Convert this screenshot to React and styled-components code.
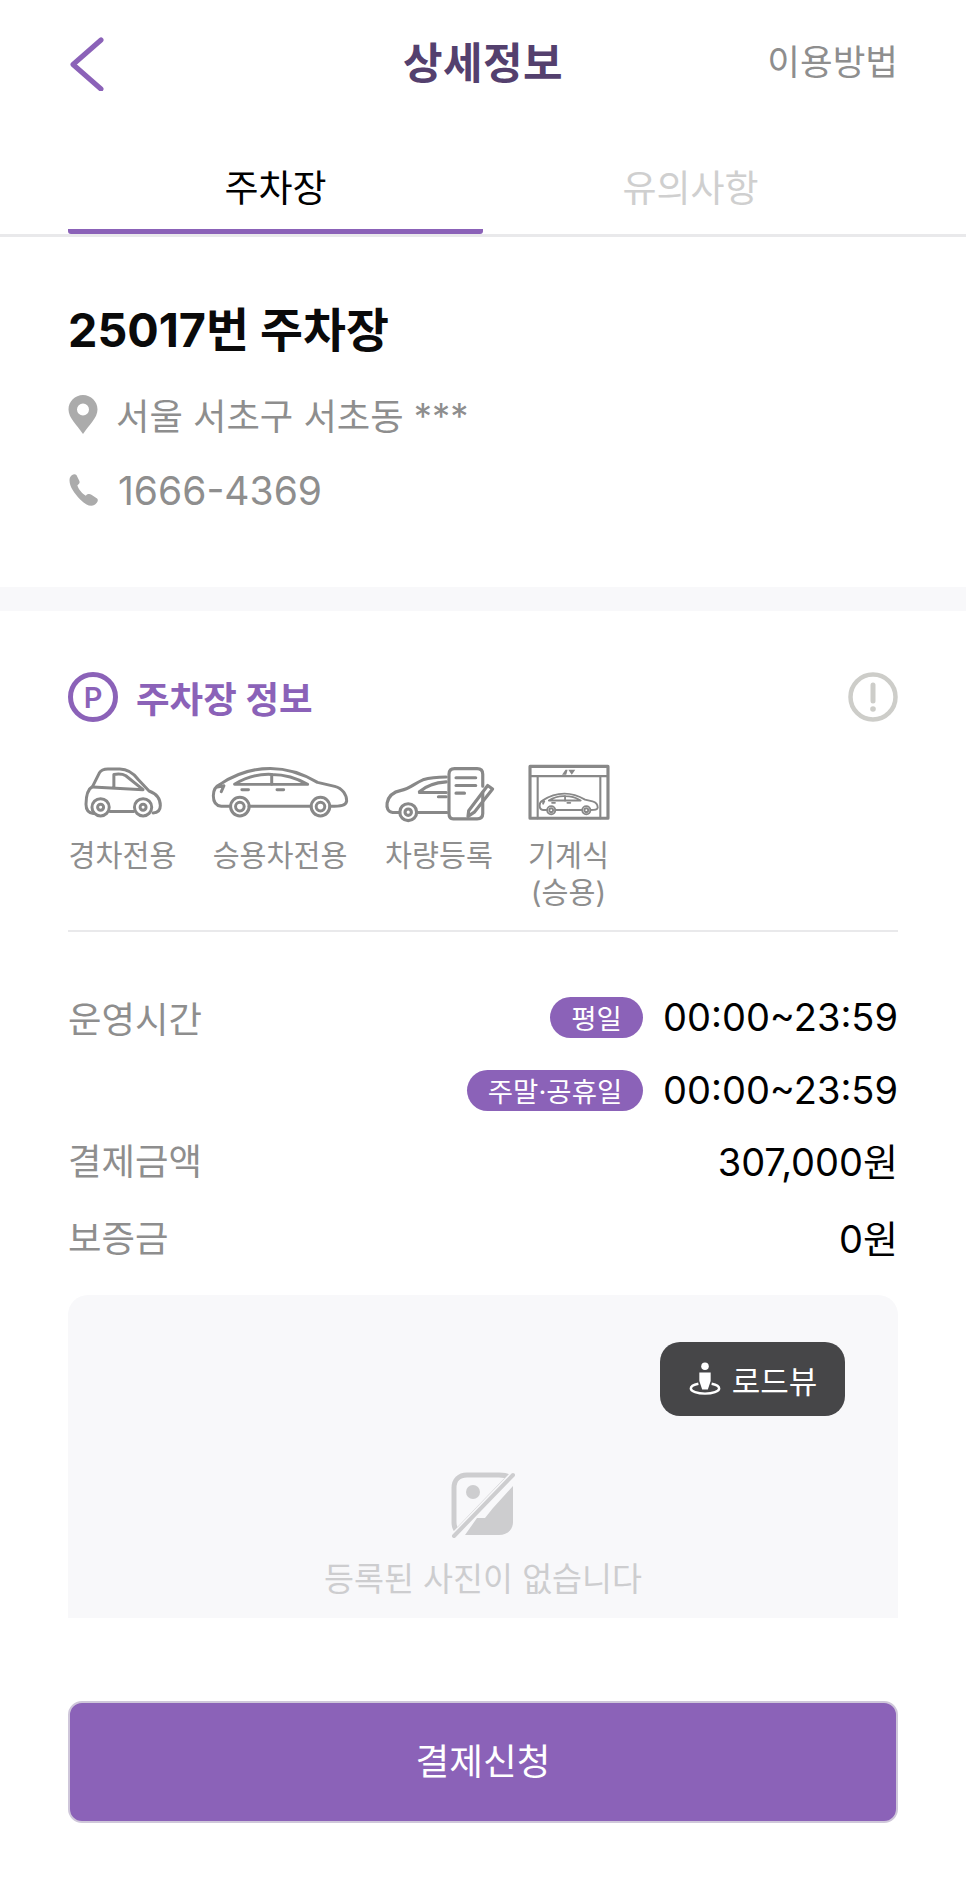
import React from "react";
import styled, { createGlobalStyle } from "styled-components";

const Global = createGlobalStyle`
  html, body { margin: 0; padding: 0; background: #fff; }
  * { box-sizing: border-box; }
  body { font-family: Inter, "Noto Sans CJK KR", sans-serif; }
`;

const PURPLE = "#8b62b8";
const GREY = "#8e8e8e";

const Page = styled.div`
  width: 966px;
  min-height: 1890px;
  background: #fff;
`;
const Header = styled.header`
  height: 125px;
  padding: 0 68px;
  display: grid;
  grid-template-columns: 1fr auto 1fr;
  align-items: center;
`;
const Back = styled.svg`
  width: 40px;
  height: 56px;
  display: block;
  fill: none;
  stroke: ${PURPLE};
  stroke-width: 5;
  stroke-linecap: round;
  stroke-linejoin: round;
`;
const Title = styled.h1`
  margin: 0;
  font-size: 43px;
  line-height: 50px;
  font-weight: 700;
  color: #54406e;
  letter-spacing: 0.5px;
`;
const HelpLink = styled.span`
  justify-self: end;
  font-size: 35.5px;
  line-height: 50px;
  color: ${GREY};
`;
const Tabs = styled.nav`
  height: 112px;
  padding: 0 68px;
  display: grid;
  grid-template-columns: 415px 415px;
  border-bottom: 3px solid #e9e9eb;
`;
const Tab = styled.div`
  display: flex;
  align-items: center;
  justify-content: center;
  height: 109px;
  padding-top: 18px;
  font-size: 37px;
  color: ${(p) => (p.$active ? "#000" : "#cfcfcf")};
  font-weight: 400;
  border-bottom: ${(p) => (p.$active ? `5px solid ${PURPLE}` : "5px solid transparent")};
  border-radius: 0 0 3px 3px;
`;
const Summary = styled.section`
  padding: 63px 68px 72px;
`;
const LotName = styled.h2`
  margin: 0;
  font-size: 46.7px;
  line-height: 60px;
  font-weight: 700;
  color: #0a0a0a;
`;
const InfoLine = styled.div`
  display: flex;
  align-items: center;
  gap: ${(p) => p.$gap}px;
  height: 50px;
  margin-top: ${(p) => p.$top}px;
  font-size: ${(p) => p.$size}px;
  color: ${GREY};
`;
const Glyph = styled.svg`
  width: 30px;
  height: 40px;
  flex: none;
  fill: #ababab;
`;
const Band = styled.div`
  height: 24px;
  background: #f8f8fa;
`;
const Detail = styled.section`
  padding: 61px 68px 0;
`;
const SectionHead = styled.div`
  display: flex;
  align-items: center;
  gap: 18px;
  height: 50px;
`;
const PBadge = styled.span`
  width: 50px;
  height: 50px;
  border-radius: 50%;
  border: 5px solid ${PURPLE};
  color: ${PURPLE};
  display: flex;
  align-items: center;
  justify-content: center;
  font-size: 29px;
  font-weight: 600;
`;
const SectionTitle = styled.h3`
  margin: 0;
  flex: 1;
  font-size: 36.5px;
  font-weight: 700;
  color: ${PURPLE};
`;
const Alert = styled.svg`
  width: 50px;
  height: 50px;
  fill: none;
  stroke: #cdcdc9;
`;
const Features = styled.div`
  display: flex;
  align-items: flex-start;
  margin-top: 43px;
  padding: 0 0 19px 2px;
  border-bottom: 2px solid #e9e9eb;
`;
const Feature = styled.div`
  display: flex;
  flex-direction: column;
  align-items: center;
  width: ${(p) => p.$w}px;
  margin-right: ${(p) => p.$gap}px;
  flex: none;
`;
const FeatureIcon = styled.svg`
  height: 55px;
  width: ${(p) => p.$w}px;
  display: block;
  flex: none;
  fill: none;
  stroke: #888;
  stroke-width: 9;
  stroke-linecap: round;
  stroke-linejoin: round;
  overflow: visible;
`;
const FeatureLabel = styled.div`
  margin-top: 17px;
  font-size: 29.3px;
  line-height: 37px;
  color: ${GREY};
  text-align: center;
  white-space: pre;
`;
const Rows = styled.div`
  margin-top: 63px;
`;
const Row = styled.div`
  display: flex;
  justify-content: space-between;
  align-items: center;
  height: 44px;
  margin-top: ${(p) => p.$top || 0}px;
`;
const RowLabel = styled.span`
  font-size: 36.4px;
  color: ${GREY};
`;
const RowValue = styled.span`
  font-size: 38px;
  color: #000;
`;
const Hours = styled.div`
  display: flex;
  align-items: center;
  gap: 20px;
  margin-left: auto;
`;
const Pill = styled.span`
  height: 41px;
  width: ${(p) => p.$w}px;
  border-radius: 21px;
  background: ${PURPLE};
  color: #fff;
  font-size: 27.5px;
  display: flex;
  align-items: center;
  justify-content: center;
`;
const Photo = styled.div`
  position: relative;
  height: 323px;
  margin-top: 37px;
  background: #f8f8fa;
  border-radius: 20px 20px 0 0;
  display: flex;
  flex-direction: column;
  align-items: center;
  padding-top: 177px;
`;
const RoadView = styled.div`
  position: absolute;
  top: 47px;
  right: 53px;
  width: 185px;
  height: 74px;
  border-radius: 20px;
  background: #464648;
  color: #fff;
  font-size: 31px;
  display: flex;
  align-items: center;
  justify-content: center;
  gap: 10px;
`;
const RoadIcon = styled.svg`
  width: 34px;
  height: 34px;
  flex: none;
`;
const NoPhotoIcon = styled.svg`
  width: 64px;
  height: 66px;
  display: block;
`;
const NoPhotoText = styled.div`
  margin-top: 16px;
  font-size: 32.6px;
  line-height: 50px;
  color: #cdcdcf;
`;
const Submit = styled.button`
  display: block;
  width: 100%;
  height: 122px;
  margin-top: 83px;
  padding: 0 0 6px;
  border: 2px solid #cfc7da;
  border-radius: 14px;
  background: ${PURPLE};
  color: #fff;
  font: inherit;
  font-size: 36.7px;
`;

const CompactCar = () => (
  <FeatureIcon $w={78} viewBox="100 345 235 155">
    <path d="M128 486C112 484 106 472 106 458C106 430 112 412 126 404L146 364C152 354 160 352 172 352H208C232 352 250 366 264 384L296 418C318 426 330 442 330 462C330 478 322 484 308 484" />
    <path d="M178 480H250" />
    <path d="M126 406L278 414L226 372C216 366 204 366 190 368V410" />
    <circle cx="150" cy="467" r="26" />
    <circle cx="150" cy="467" r="9" />
    <circle cx="278" cy="467" r="26" />
    <circle cx="278" cy="467" r="9" />
  </FeatureIcon>
);

const sedanBody = (
  <>
    <path d="M544 464H516C498 462 492 448 492 432C492 414 498 404 512 398C556 368 610 350 664 350C716 350 766 368 806 392L858 404C882 410 894 430 894 448C892 462 878 464 844 464" />
    <path d="M600 464H786" />
    <path d="M556 398C590 376 628 366 668 368C712 368 746 380 776 398Z" />
    <path d="M668 368V398" />
    <path d="M578 414H598M684 414H704M504 406L524 402L516 420" />
    <circle cx="572" cy="465" r="28" />
    <circle cx="572" cy="465" r="13" />
    <circle cx="815" cy="465" r="28" />
    <circle cx="815" cy="465" r="13" />
  </>
);

const Sedan = () => (
  <FeatureIcon $w={136} viewBox="488 345 410 155">{sedanBody}</FeatureIcon>
);

const Registration = () => (
  <FeatureIcon $w={109} viewBox="38 352 310 156">
    <path d="M80 487H60C46 485 42 474 44 460C48 438 64 428 84 424C108 420 122 404 146 394C166 388 190 386 212 386" />
    <path d="M128 487H214" />
    <path d="M136 428C156 410 184 402 212 400" />
    <path d="M136 430H212M190 442H212" />
    <circle cx="104" cy="486" r="24" />
    <circle cx="104" cy="486" r="9" />
    <path d="M316 430V490C316 500 310 505 300 505H232C224 505 220 500 220 490V378C220 368 226 362 236 362H300C310 362 316 368 316 378V412" />
    <path d="M240 388H296M240 410H296M240 432H264" />
    <path d="M276 482L330 410L344 420L292 486L274 498Z" />
  </FeatureIcon>
);

const Mechanical = () => (
  <FeatureIcon $w={82} viewBox="440 344 232 158">
    <rect x="444" y="348" width="224" height="149" />
    <path d="M444 376H668M466 376V497M646 376V497" strokeWidth="6" />
    <path d="M536 372L546 358H552L548 372ZM554 358H574L564 372Z" fill="#888" stroke="none" />
    <g transform="translate(470 424) scale(0.415) translate(-488 -345)" strokeWidth="13">
      {sedanBody}
    </g>
  </FeatureIcon>
);

const features = [
  { w: 105, gap: 38, label: "경차전용", icon: <CompactCar /> },
  { w: 134, gap: 38, label: "승용차전용", icon: <Sedan /> },
  { w: 108, gap: 35, label: "차량등록", icon: <Registration /> },
  { w: 81, gap: 0, label: "기계식\n(승용)", icon: <Mechanical /> },
];

export default function App() {
  return (
    <Page>
      <Global />
      <Header>
        <Back viewBox="0 0 40 56">
          <path d="M33 5L5 29.5L33 54" />
        </Back>
        <Title>상세정보</Title>
        <HelpLink>이용방법</HelpLink>
      </Header>
      <Tabs>
        <Tab $active>주차장</Tab>
        <Tab>유의사항</Tab>
      </Tabs>
      <Summary>
        <LotName>25017번 주차장</LotName>
        <InfoLine $top={29} $size={36.3} $gap={18}>
          <Glyph viewBox="0 0 30 40">
            <path fillRule="evenodd" d="M15 1C7 1 0.5 7.5 0.5 15.5C0.5 24 9 31 15 40C21 31 29.5 24 29.5 15.5C29.5 7.5 23 1 15 1ZM15 9.5A6 6 0 1 1 15 21.5A6 6 0 1 1 15 9.5Z" />
          </Glyph>
          서울 서초구 서초동 ***
        </InfoLine>
        <InfoLine $top={26} $size={39} $gap={20}>
          <Glyph viewBox="0 0 32 36">
            <path d="M2 5C3 2 7 0 9 2L12 8C13 10 12 12 10 13C11 17 15 22 19 24C21 22 23 22 25 23L31 27C33 29 31 32 28 34C24 36 19 34 13 28C6 21 0 12 2 5Z" />
          </Glyph>
          1666-4369
        </InfoLine>
      </Summary>
      <Band />
      <Detail>
        <SectionHead>
          <PBadge>P</PBadge>
          <SectionTitle>주차장 정보</SectionTitle>
          <Alert viewBox="0 0 50 50">
            <circle cx="25" cy="25" r="22.5" strokeWidth="4.5" />
            <path d="M25 13V29" strokeWidth="5" strokeLinecap="round" />
            <circle cx="25" cy="37" r="2.8" fill="#cdcdc9" stroke="none" />
          </Alert>
        </SectionHead>
        <Features>
          {features.map((f) => (
            <Feature key={f.label} $w={f.w} $gap={f.gap}>
              {f.icon}
              <FeatureLabel>{f.label}</FeatureLabel>
            </Feature>
          ))}
        </Features>
        <Rows>
          <Row>
            <RowLabel>운영시간</RowLabel>
            <Hours>
              <Pill $w={93}>평일</Pill>
              <RowValue>00:00~23:59</RowValue>
            </Hours>
          </Row>
          <Row $top={29}>
            <Hours>
              <Pill $w={176}>주말·공휴일</Pill>
              <RowValue>00:00~23:59</RowValue>
            </Hours>
          </Row>
          <Row $top={25}>
            <RowLabel>결제금액</RowLabel>
            <RowValue>307,000원</RowValue>
          </Row>
          <Row $top={33}>
            <RowLabel>보증금</RowLabel>
            <RowValue>0원</RowValue>
          </Row>
        </Rows>
        <Photo>
          <RoadView>
            <RoadIcon viewBox="0 0 34 36">
              <circle cx="17" cy="4.5" r="4" fill="#fff" />
              <path d="M11 11H23V20L20 29H14L11 20Z" fill="#fff" />
              <path d="M10 23C5 24 2 26 2 28C2 31 9 33.5 17 33.5C25 33.5 32 31 32 28C32 26 29 24 24 23" fill="none" stroke="#fff" strokeWidth="2.6" />
            </RoadIcon>
            로드뷰
          </RoadView>
          <NoPhotoIcon viewBox="0 0 64 66">
            <path d="M48 3H16C8 3 3 8 3 16V50C3 54 4 57 6 59L58 5C55 3 52 3 48 3Z" fill="none" stroke="#cdcdcf" strokeWidth="5" />
            <circle cx="22" cy="20" r="7" fill="#cdcdcf" />
            <path d="M14 63H48C56 63 62 58 62 50V14L42 36L34 46H26Z" fill="#cdcdcf" />
            <path d="M3 64L62 3" stroke="#f8f8fa" strokeWidth="7" />
            <path d="M3 64L62 3" stroke="#cdcdcf" strokeWidth="4" strokeLinecap="round" />
          </NoPhotoIcon>
          <NoPhotoText>등록된 사진이 없습니다</NoPhotoText>
        </Photo>
        <Submit>결제신청</Submit>
      </Detail>
    </Page>
  );
}
